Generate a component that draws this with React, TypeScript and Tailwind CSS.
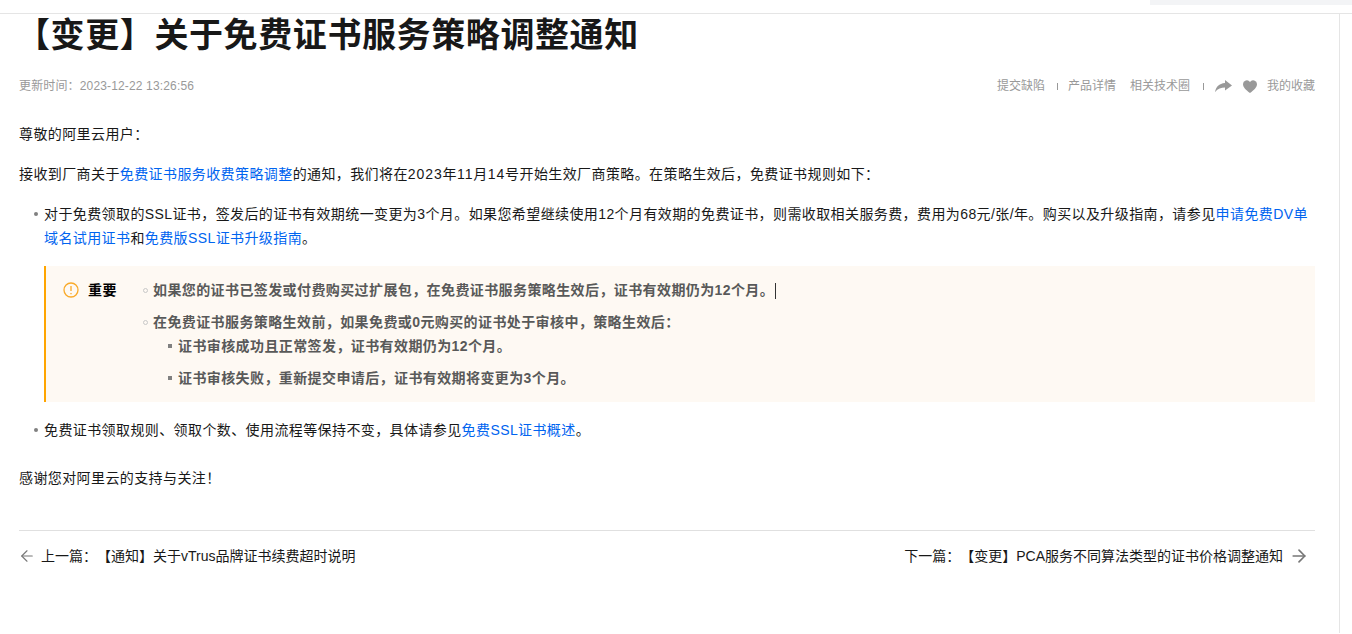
import { ArrowLeft, ArrowRight } from "lucide-react";

const font = "font-['Liberation_Sans','Noto_Sans_CJK_SC',sans-serif]";

function A({ children }: { children: React.ReactNode }) {
  return <a className="text-[#0064f0]">{children}</a>;
}

function Bullet({ className }: { className: string }) {
  return <span className={`absolute ${className}`} />;
}

// digits sit a little wider than the Liberation defaults
function Num({ children }: { children: React.ReactNode }) {
  return <span className="tracking-[0.9px]">{children}</span>;
}

export default function App() {
  return (
    <div className={`${font} w-[1352px] h-[634px] overflow-hidden bg-white text-sm text-[#181818] [text-spacing-trim:space-all]`}>
      {/* top strip */}
      <div className="h-[14px] border-b border-[#e5e5e5] flex justify-end items-start">
        <div className="w-[202px] h-[5px] bg-[#f3f4f6]" />
      </div>

      <div className="w-[1340px] h-[620px] border-r border-[#e5e5e5] pl-[19px] pr-[24px]">
        <h1 className="text-[34px] leading-[44px] font-bold tracking-[0.6px] text-[#181818] -mt-[1px] -ml-[3px]">
          【变更】关于免费证书服务策略调整通知
        </h1>

        <div className="flex justify-between items-center h-[20px] mt-[19px] text-xs text-[#999]">
          <span className="tracking-[0.15px]">更新时间：2023-12-22 13:26:56</span>
          <div className="flex items-center">
            <span>提交缺陷</span>
            <span className="w-px h-[7px] bg-[#999] ml-3 mr-[10px]" />
            <span>产品详情</span>
            <span className="ml-[14px]">相关技术圈</span>
            <span className="w-px h-[7px] bg-[#999] ml-[13px] mr-[11px]" />
            <svg width="17" height="12" viewBox="0 0 17 12" fill="#999">
              <path d="M10 0l7 5.500-7 5V7.500C6 7.500 3 8.500 0 12c1-5 4-8.500 10-9z" />
            </svg>
            <svg width="14" height="13" viewBox="0 0 14 13" fill="#999" className="ml-[11px]">
              <path d="M7 13C3 10 0 7.500 0 4a3.800 3.800 0 0 1 7-2 3.800 3.800 0 0 1 7 2c0 3.500-3 6-7 9z" />
            </svg>
            <span className="ml-[10px]">我的收藏</span>
          </div>
        </div>

        <div className="tracking-[0.4px]">
          <p className="mt-[26px] leading-6">尊敬的阿里云用户：</p>
          <p className="mt-4 leading-6">
            接收到厂商关于<A>免费证书服务收费策略调整</A>的通知，我们将在<Num>2023</Num>年<Num>11</Num>月<Num>14</Num>号开始生效厂商策略。在策略生效后，免费证书规则如下：
          </p>

          <div className="relative mt-4 pl-[25px] leading-6">
            <Bullet className="left-[15px] top-[10px] size-1 rounded-full bg-[#808080]" />
            对于免费领取的SSL证书，签发后的证书有效期统一变更为3个月。如果您希望继续使用12个月有效期的免费证书，则需收取相关服务费，费用为68元/张/年。购买以及升级指南，请参见<A>申请免费DV单域名试用证书</A>和<A>免费版SSL证书升级指南</A>。
          </div>

          <div className="ml-[25px] mt-4 h-[136px] border-l-2 border-[#ffa500] bg-[#fef9f3] flex pl-[17px] pt-3 leading-6">
            <svg width="16" height="16" viewBox="0 0 16 16" fill="none" stroke="#f9aa2a" strokeWidth="1.300" className="mt-1 shrink-0">
              <circle cx="8" cy="8" r="7" />
              <path d="M8 4v5M8 11v1.300" />
            </svg>
            <span className="ml-[9px] w-[54px] font-bold text-black shrink-0">重要</span>
            <div className="font-bold text-[#595959]">
              <div className="relative pl-[11px]">
                <Bullet className="left-[1px] top-[10px] size-[5px] rounded-full border border-[#c8c8c8]" />
                <span>如果您的证书已签发或付费购买过扩展包，在免费证书服务策略生效后，证书有效期仍为12个月。</span>
                <span className="inline-block w-px h-4 bg-[#333] ml-[1px] align-middle" />
              </div>
              <div className="relative pl-[11px] mt-2">
                <Bullet className="left-[1px] top-[10px] size-[5px] rounded-full border border-[#c8c8c8]" />
                在免费证书服务策略生效前，如果免费或0元购买的证书处于审核中，策略生效后：
              </div>
              <div className="relative pl-[36px]">
                <Bullet className="left-[26px] top-[10px] size-1 bg-[#808080]" />
                证书审核成功且正常签发，证书有效期仍为12个月。
              </div>
              <div className="relative pl-[36px] mt-2">
                <Bullet className="left-[26px] top-[10px] size-1 bg-[#808080]" />
                证书审核失败，重新提交申请后，证书有效期将变更为3个月。
              </div>
            </div>
          </div>

          <div className="relative mt-4 pl-[25px] leading-6">
            <Bullet className="left-[15px] top-[10px] size-1 rounded-full bg-[#808080]" />
            免费证书领取规则、领取个数、使用流程等保持不变，具体请参见<A>免费SSL证书概述</A>。
          </div>

          <p className="mt-6 leading-6">感谢您对阿里云的支持与关注！</p>

          <div className="mt-[40px] border-t border-[#e0e0e0] pt-[13px] flex justify-between items-center leading-[24px] tracking-normal text-[#181818]">
            <div className="flex items-center">
              <ArrowLeft size={18} strokeWidth={1.500} color="#777" className="-ml-[1px] mr-[5px]" />
              <span>上一篇：【通知】关于vTrus品牌证书续费超时说明</span>
            </div>
            <div className="flex items-center pr-[6px]">
              <span>下一篇：【变更】PCA服务不同算法类型的证书价格调整通知</span>
              <ArrowRight size={20} strokeWidth={2} color="#777" className="ml-[6px]" />
            </div>
          </div>
        </div>
      </div>
    </div>
  );
}
